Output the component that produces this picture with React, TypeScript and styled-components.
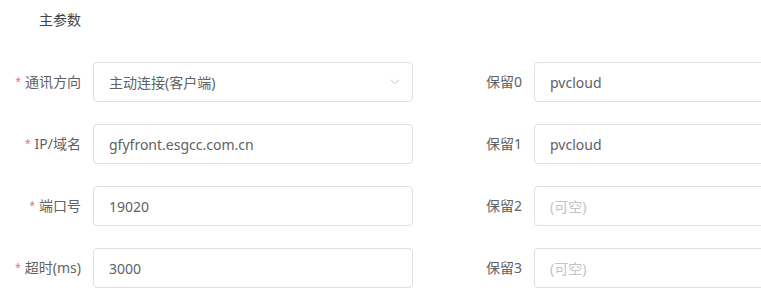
import React from "react";
import styled, { createGlobalStyle } from "styled-components";

const GlobalStyle = createGlobalStyle`
  html, body {
    margin: 0;
    padding: 0;
    background: #ffffff;
    overflow: hidden;
  }
  body {
    font-family: "Noto Sans", "Noto Sans CJK SC", sans-serif;
    -webkit-font-smoothing: antialiased;
  }
`;

const Page = styled.div`
  width: 761px;
  height: 307px;
  overflow: hidden;
`;

const Title = styled.div`
  padding-left: 39px;
  margin-top: 10px;
  height: 20px;
  line-height: 20px;
  font-size: 14px;
  color: #444;
  margin-bottom: 32px;
`;

const Form = styled.div`
  display: grid;
  grid-template-columns: 413px 441px;
  column-gap: 28px;
  row-gap: 22px;
`;

const Item = styled.div`
  display: flex;
  align-items: center;
  height: 40px;
`;

const Label = styled.label`
  flex: 0 0 93px;
  box-sizing: border-box;
  padding-right: 12px;
  text-align: right;
  font-size: 14px;
  line-height: 40px;
  color: #606266;
  white-space: nowrap;
`;

const Star = styled.span`
  font-family: "Liberation Sans", Arial, sans-serif;
  color: #f56c6c;
  margin-right: 4px;
`;

const Field = styled.div`
  position: relative;
  flex: 0 0 320px;
  height: 40px;
  box-sizing: border-box;
  border: 1px solid #dcdfe6;
  border-radius: 4px;
  background: #fff;
  display: flex;
  align-items: center;
  padding: 0 15px;
  font-size: 14px;
  color: #606266;
`;

const Value = styled.span<{ $placeholder?: boolean }>`
  color: ${(p) => (p.$placeholder ? "#c0c4cc" : "#606266")};
  white-space: nowrap;
`;

const Suffix = styled.span`
  position: absolute;
  right: 5px;
  top: 0;
  width: 25px;
  height: 38px;
  display: flex;
  align-items: center;
  justify-content: center;
`;

const Chevron = () => (
  <svg width="10" height="6" viewBox="0 0 10 6" fill="none">
    <path d="M1 0.8 L5 4.8 L9 0.8" stroke="#c0c4cc" strokeWidth="1" />
  </svg>
);

type Row = {
  label: string;
  required?: boolean;
  value: string;
  placeholder?: boolean;
  select?: boolean;
};

const rows: [Row, Row][] = [
  [
    { label: "通讯方向", required: true, value: "主动连接(客户端)", select: true },
    { label: "保留0", value: "pvcloud" },
  ],
  [
    { label: "IP/域名", required: true, value: "gfyfront.esgcc.com.cn" },
    { label: "保留1", value: "pvcloud" },
  ],
  [
    { label: "端口号", required: true, value: "19020" },
    { label: "保留2", value: "(可空)", placeholder: true },
  ],
  [
    { label: "超时(ms)", required: true, value: "3000" },
    { label: "保留3", value: "(可空)", placeholder: true },
  ],
];

const FormItem = ({ row }: { row: Row }) => (
  <Item>
    <Label>
      {row.required && <Star>*</Star>}
      {row.label}
    </Label>
    <Field>
      <Value $placeholder={row.placeholder}>{row.value}</Value>
      {row.select && (
        <Suffix>
          <Chevron />
        </Suffix>
      )}
    </Field>
  </Item>
);

export default function App() {
  return (
    <Page>
      <GlobalStyle />
      <Title>主参数</Title>
      <Form>
        {rows.map((pair, i) => (
          <React.Fragment key={i}>
            <FormItem row={pair[0]} />
            <FormItem row={pair[1]} />
          </React.Fragment>
        ))}
      </Form>
    </Page>
  );
}
